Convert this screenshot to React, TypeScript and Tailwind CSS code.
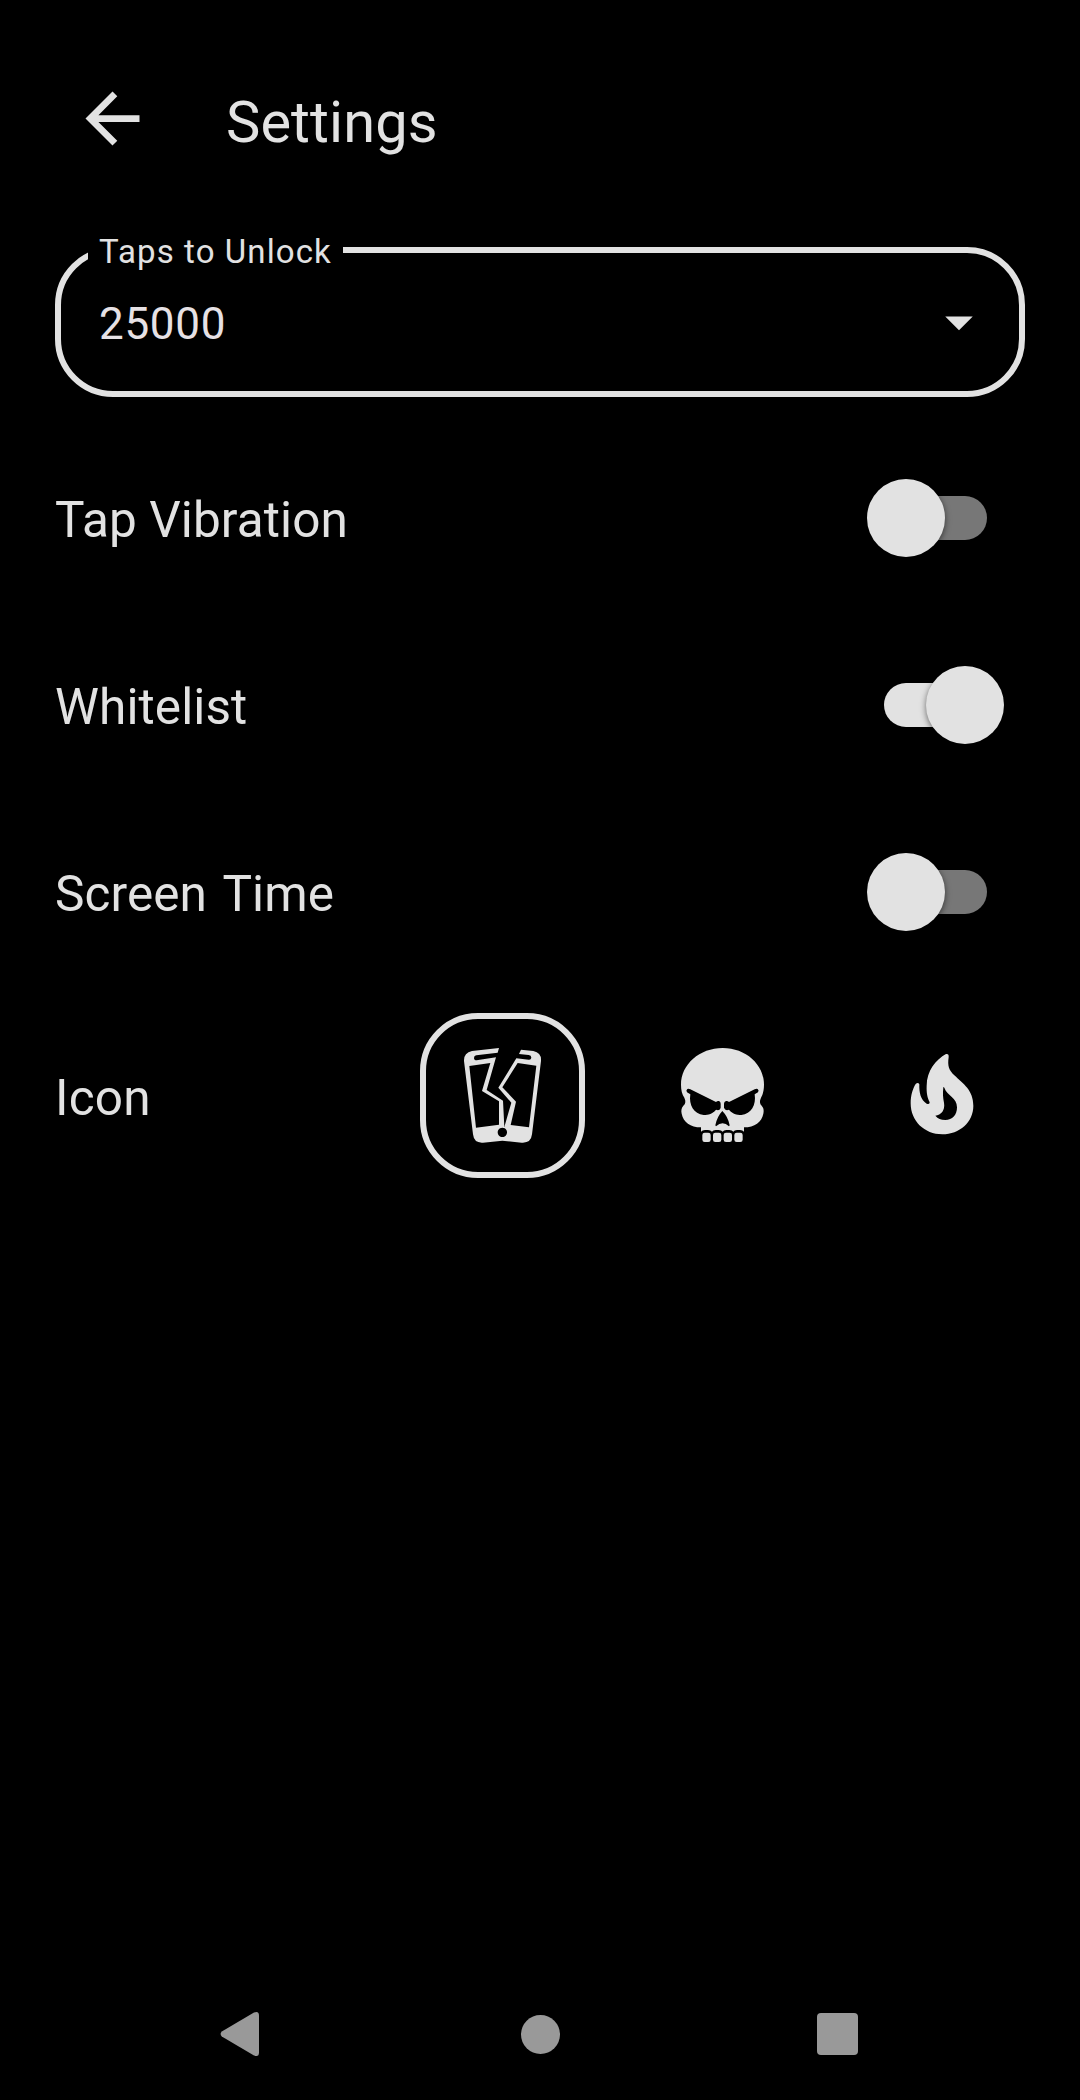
import React, { useState } from "react";

function BackArrow() {
  return (
    <svg viewBox="0 0 24 24" className="h-[81px] w-[81px]" fill="currentColor">
      <path d="M20,11H7.83l5.59,-5.59L12,4l-8,8 8,8 1.41,-1.41L7.83,13H20v-2z" />
    </svg>
  );
}

function BrokenPhone() {
  return (
    <svg viewBox="-72 -48 459 459" className="h-full w-full" fill="currentColor">
      <path
        fillRule="evenodd"
        d="M147 39L66 48Q41 53 42 78L69 298Q72 325 99 323L157 317L215 323Q243 325 246 298L273 78Q275 53 250 48L213 44L207 57L236 60Q244 61 244 68Q243 75 236 74L199 70L145 158L184 203L163 276L159 197L110 165L138 67L80 76Q72 76 72 69Q72 62 79 61L143 53ZM58 93L121 84L96 168L147 199V269L78 278ZM203 84L259 92L237 277L182 270L198 200L157 157ZM157 278a14 14 0 1 0 0.1 0Z"
      />
    </svg>
  );
}

function Skull() {
  return (
    <svg viewBox="-42 -33 459 459" className="h-full w-full" fill="currentColor">
      <path d="M188 54C257 54 312 103 312 164C312 180 309 192 303 203C298 213 299 221 305 227C311 234 312 241 310 251C305 276 284 292 252 292V305Q248 300 240 300H231Q223 300 220 305Q216 300 208 300H199Q191 300 188 305Q184 300 176 300H167Q159 300 156 305Q152 300 144 300H135Q127 300 123 305V292C91 292 70 276 65 251C63 241 64 234 70 227C77 221 78 213 73 203C66 192 63 180 63 164C63 103 119 54 188 54Z" />
      <g className="fill-black">
        <path d="M82 177Q86 175 91 178L168 216Q172 212 177 213Q182 215 182 221V233Q181 240 174 241L168 239C158 251 145 255 131 255C101 252 86 225 91 193L81 187Q77 181 82 177Z" />
        <path d="M293 177Q289 175 284 178L207 216Q203 212 198 213Q192 215 192 221V233Q194 240 201 241L207 239C217 251 230 255 244 255C274 252 289 225 284 193L294 187Q298 181 293 177Z" />
        <path d="M187 243Q204 260 209 286L207 289Q188 270 168 289L166 286Q171 260 187 243Z" />
      </g>
      <rect x="127" y="308" width="25" height="28" rx="7" />
      <rect x="159" y="308" width="25" height="28" rx="7" />
      <rect x="191" y="308" width="25" height="28" rx="7" />
      <rect x="223" y="308" width="25" height="28" rx="7" />
    </svg>
  );
}

function Flame() {
  return (
    <svg viewBox="-72 -48 459 459" className="h-full w-full" fill="currentColor">
      <path
        fillRule="evenodd"
        d="M168 57Q177 55 176 66C172 94 177 105 193 121C220 147 250 165 250 213C250 261 209 298 157 298C103 298 62 258 62 205C62 182 68 161 77 147Q84 140 88 148C87 173 92 195 110 206Q119 210 119 202C112 187 109 174 110 152C110 107 138 74 168 57ZM160 157C158 176 159 189 162 203C166 226 153 240 136 242C144 251 152 255 166 255C187 255 201 240 201 217C201 186 172 184 163 158Q161 155 160 157Z"
      />
    </svg>
  );
}

function Switch({ on, onToggle, label }: { on: boolean; onToggle: () => void; label: string }) {
  return (
    <button
      role="switch"
      aria-checked={on}
      aria-label={label}
      onClick={onToggle}
      className="relative mt-[54px] mr-[21px] flex h-[78px] w-[137px] items-center justify-center"
    >
      <span className={`h-[44px] w-[103px] rounded-full ${on ? "bg-[#e2e2e2]" : "bg-[#777777]"}`} />
      <span
        className={`absolute top-0 h-[78px] w-[78px] rounded-full bg-[#e2e2e2] shadow-[0_2px_6px_rgba(0,0,0,0.55)] ${
          on ? "right-0" : "left-0"
        }`}
      />
    </button>
  );
}

const iconChoices = [
  { name: "Broken phone", Icon: BrokenPhone },
  { name: "Skull", Icon: Skull },
  { name: "Flame", Icon: Flame },
];

export default function App() {
  const [toggles, setToggles] = useState([
    { label: "Tap Vibration", on: false },
    { label: "Whitelist", on: true },
    { label: "Screen Time", on: false },
  ]);
  const [selected, setSelected] = useState(0);

  const flip = (index: number) =>
    setToggles(toggles.map((t, i) => (i === index ? { ...t, on: !t.on } : t)));

  return (
    <div className="flex h-[2100px] w-[1080px] flex-col bg-black font-['Roboto',sans-serif] text-[#e2e2e2]">
      <header className="flex h-[247px] items-start pt-[78px] pl-[72px]">
        <button aria-label="Back">
          <BackArrow />
        </button>
        <h1 className="mt-[6px] ml-[73px] text-[57.75px] leading-[76px] tracking-[0.1px]">Settings</h1>
      </header>

      <main className="flex flex-1 flex-col px-[55px]">
        <div className="relative flex h-[150px] items-center justify-between rounded-[58px] border-[6px] border-[#e2e2e2] pr-[27px] pl-[38px]">
          <span className="absolute -top-[23px] left-[27px] bg-black px-[11px] text-[33px] leading-[44px] tracking-[1.1px] whitespace-nowrap">
            Taps to Unlock
          </span>
          <span className="pt-[4px] text-[44px] leading-[60px] tracking-[0.7px] text-[#e6e1e5]">25000</span>
          <svg viewBox="0 0 24 24" className="h-[66px] w-[66px]" fill="currentColor">
            <path d="M7,10l5,5 5,-5z" />
          </svg>
        </div>

        <div className="mt-[28px] flex flex-col">
          {toggles.map((t, i) => (
            <div key={t.label} className="flex h-[187px] items-start justify-between">
              <span
                className={`pt-[62px] text-[49.5px] leading-[66px] tracking-[0.1px] ${
                  t.label === "Screen Time" ? "[word-spacing:4px]" : ""
                }`}
              >
                {t.label}
              </span>
              <Switch on={t.on} onToggle={() => flip(i)} label={t.label} />
            </div>
          ))}
        </div>

        <div className="mt-[27px] flex items-center justify-between">
          <span className="pt-[4px] text-[49.5px] leading-[66px] tracking-[0.2px]">Icon</span>
          <div className="flex gap-[55px]">
            {iconChoices.map(({ name, Icon }, i) => (
              <button
                key={name}
                aria-label={name}
                onClick={() => setSelected(i)}
                className={`h-[165px] w-[165px] rounded-[58px] border-[6px] ${
                  selected === i ? "border-[#e2e2e2]" : "border-transparent"
                }`}
              >
                <Icon />
              </button>
            ))}
          </div>
        </div>
      </main>

      <nav className="flex h-[132px] items-center pl-[220px] text-[#999999]">
        <svg viewBox="0 0 39 46" className="h-[46px] w-[39px]" fill="currentColor">
          <path d="M1.8 20.6L34 1.5Q39 -0.5 39 4.5V41.5Q39 46.5 34 44.5L1.8 25.4Q-0.6 23 1.8 20.6Z" />
        </svg>
        <span className="ml-[262px] h-[39px] w-[39px] rounded-full bg-[#999999]" />
        <span className="ml-[257px] h-[42px] w-[41px] rounded-[4px] bg-[#999999]" />
      </nav>
    </div>
  );
}
